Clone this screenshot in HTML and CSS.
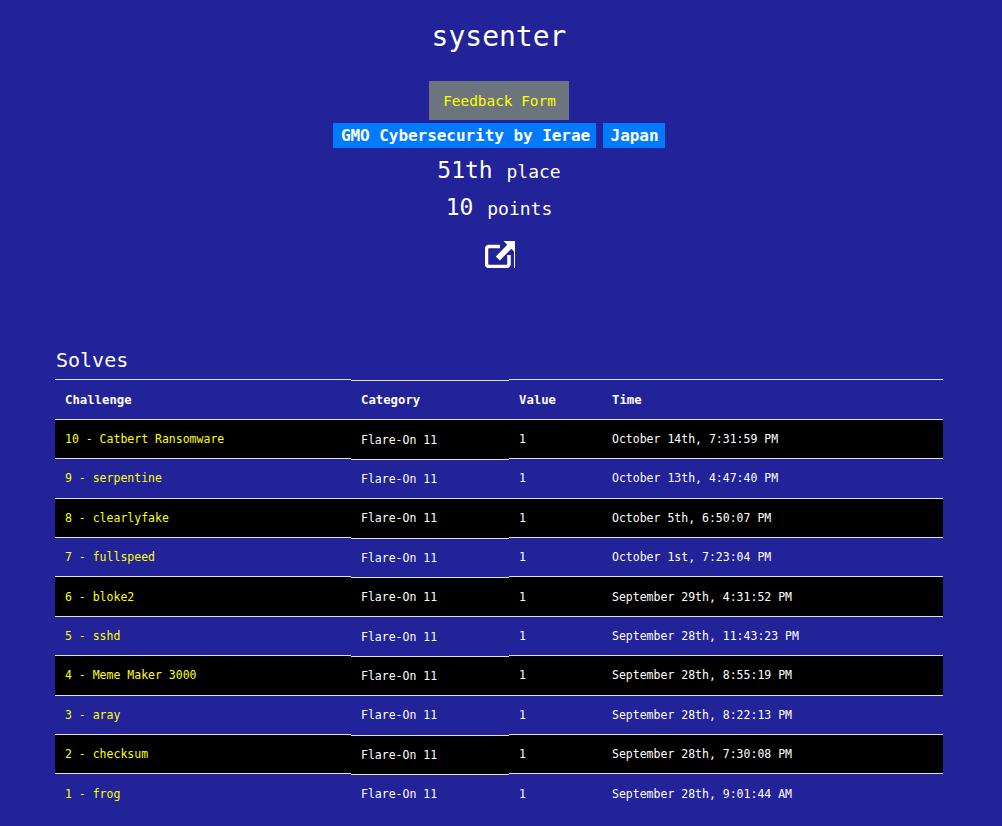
FILE: index.html
```html
<!DOCTYPE html>
<html lang="en">
<head>
<meta charset="utf-8">
<title>sysenter</title>
<link rel="stylesheet" href="styles.css">
</head>
<body>
<header class="hero">
  <h1 class="team-name">sysenter</h1>
  <a class="feedback-btn" href="#">Feedback Form</a>
  <div class="badges">
    <span class="badge">GMO Cybersecurity by Ierae</span>
    <span class="badge">Japan</span>
  </div>
  <div class="stat"><span class="stat-num">51th</span> place</div>
  <div class="stat"><span class="stat-num">10</span> points</div>
  <a class="ext-link" href="#" aria-label="Open external link">
    <svg class="ext-icon" viewBox="0 0 30 27" width="30" height="27" aria-hidden="true">
      <path d="M15 5.500H4a2.500 2.500 0 0 0-2.500 2.500v15A2.500 2.500 0 0 0 4 25.500h17.500a2.500 2.500 0 0 0 2.500-2.500V14" fill="none" stroke="#fff" stroke-width="3.500"/>
      <path d="M18.500 0H30v11.500l-3.700-3.700L14.800 19.500l-4-4L22.300 3.700z" fill="#fff"/>
      <rect x="29" y="0" width="1" height="27" fill="#fff"/>
    </svg>
  </a>
</header>
<main class="solves">
  <h3 class="solves-title">Solves</h3>
  <table class="solves-table">
    <colgroup><col class="c1"><col class="c2"><col class="c3"><col class="c4"></colgroup>
    <thead>
      <tr><th>Challenge</th><th class="cat">Category</th><th>Value</th><th>Time</th></tr>
    </thead>
    <tbody>
      <tr><td><a href="#">10 - Catbert Ransomware</a></td><td class="cat">Flare-On 11</td><td>1</td><td>October 14th, 7:31:59 PM</td></tr>
      <tr><td><a href="#">9 - serpentine</a></td><td class="cat">Flare-On 11</td><td>1</td><td>October 13th, 4:47:40 PM</td></tr>
      <tr><td><a href="#">8 - clearlyfake</a></td><td class="cat">Flare-On 11</td><td>1</td><td>October 5th, 6:50:07 PM</td></tr>
      <tr><td><a href="#">7 - fullspeed</a></td><td class="cat">Flare-On 11</td><td>1</td><td>October 1st, 7:23:04 PM</td></tr>
      <tr><td><a href="#">6 - bloke2</a></td><td class="cat">Flare-On 11</td><td>1</td><td>September 29th, 4:31:52 PM</td></tr>
      <tr><td><a href="#">5 - sshd</a></td><td class="cat">Flare-On 11</td><td>1</td><td>September 28th, 11:43:23 PM</td></tr>
      <tr><td><a href="#">4 - Meme Maker 3000</a></td><td class="cat">Flare-On 11</td><td>1</td><td>September 28th, 8:55:19 PM</td></tr>
      <tr><td><a href="#">3 - aray</a></td><td class="cat">Flare-On 11</td><td>1</td><td>September 28th, 8:22:13 PM</td></tr>
      <tr><td><a href="#">2 - checksum</a></td><td class="cat">Flare-On 11</td><td>1</td><td>September 28th, 7:30:08 PM</td></tr>
      <tr><td><a href="#">1 - frog</a></td><td class="cat">Flare-On 11</td><td>1</td><td>September 28th, 9:01:44 AM</td></tr>
    </tbody>
  </table>
</main>
</body>
</html>
```
FILE: styles.css
```css
* { box-sizing: border-box; }
html, body { margin: 0; padding: 0; }
body {
  background: #222299;
  color: #fff;
  font-family: "DejaVu Sans Mono", "Liberation Mono", monospace;
  height: 826px;
  overflow: hidden;
}
a { color: #ffff00; text-decoration: none; }

.hero {
  display: flex;
  flex-direction: column;
  align-items: center;
  padding: 18px 4px 0 0;
}
.team-name {
  margin: 0 0 25px;
  height: 38px;
  font-size: 28px;
  line-height: 38px;
  font-weight: 400;
}
.feedback-btn {
  display: block;
  width: 140px;
  height: 39px;
  padding-left: 1px;
  line-height: 40px;
  text-align: center;
  background: #6c757d;
  font-size: 14.4px;
}
.badges {
  display: flex;
  gap: 7px;
  margin-top: 3px;
}
.badge {
  background: #007bff;
  color: #fff;
  font-size: 16px;
  letter-spacing: -0.05px;
  font-weight: 700;
  height: 25px;
  line-height: 25px;
  padding: 0 6px 0 7.500px;
}
.stat {
  font-size: 18px;
  height: 37px;
  line-height: 44px;
}
.stat-num { font-size: 23px; margin-right: 3px; }
.ext-link { display: block; height: 27px; margin-top: 19px; padding-left: 1px; }
.ext-icon { display: block; }

.solves { margin: 79.450px 59px 0 55px; }
.solves-title {
  margin: 0;
  height: 32px;
  padding-left: 1px;
  font-size: 20px;
  line-height: 26px;
  font-weight: 400;
}
.solves-table {
  width: 888px;
  table-layout: fixed;
  border-collapse: separate;
  border-spacing: 0;
}
.c1 { width: 296px; }
.c2 { width: 158px; }
.c3 { width: 93px; }
.c4 { width: 341px; }
.solves-table th, .solves-table td {
  border-top: 1px solid #dee2e6;
  padding: 0 10px;
  height: 39.400px;
  text-align: left;
  white-space: nowrap;
}
.solves-table th { font-size: 12.300px; font-weight: 700; }
.solves-table td { font-size: 11.500px; }
.solves-table tbody tr:nth-child(odd) { background: #000; }
.cat { position: relative; top: 0.600px; }
```
